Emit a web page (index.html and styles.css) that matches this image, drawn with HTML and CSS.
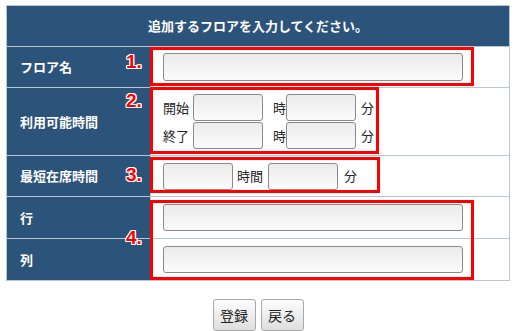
FILE: index.html
```html
<!DOCTYPE html>
<html lang="ja">

<head>
    <meta charset="UTF-8">
    <title>フロア追加</title>
    <link rel="stylesheet" href="styles.css">
</head>

<body>
    <div class="page">
        <div class="form-wrap">
            <table class="floor-form">
                <tr>
                    <th colspan="2" class="form-title">追加するフロアを入力してください。</th>
                </tr>
                <tr class="row-a">
                    <th>フロア名</th>
                    <td><input type="text" class="wide"></td>
                </tr>
                <tr class="row-b">
                    <th>利用可能時間</th>
                    <td>
                        <div class="time-line">
                            <span>開始</span><input type="text" class="short first"><span class="unit-h">時</span><input type="text" class="short"><span class="unit-m">分</span>
                        </div>
                        <div class="time-line">
                            <span>終了</span><input type="text" class="short first"><span class="unit-h">時</span><input type="text" class="short"><span class="unit-m">分</span>
                        </div>
                    </td>
                </tr>
                <tr class="row-a">
                    <th>最短在席時間</th>
                    <td>
                        <div class="time-line">
                            <input type="text" class="short"><span class="unit-hours">時間</span><input type="text" class="short"><span class="unit-min">分</span>
                        </div>
                    </td>
                </tr>
                <tr class="row-c">
                    <th>行</th>
                    <td><input type="text" class="wide"></td>
                </tr>
                <tr class="row-c">
                    <th>列</th>
                    <td><input type="text" class="wide"></td>
                </tr>
            </table>

            <!-- annotations -->
            <div class="mark box1"></div>
            <div class="mark box2"></div>
            <div class="mark box3"></div>
            <div class="mark box4"></div>
            <span class="num num1">1.</span>
            <span class="num num2">2.</span>
            <span class="num num3">3.</span>
            <span class="num num4">4.</span>
        </div>

        <div class="buttons">
            <button class="btn">登録</button>
            <button class="btn">戻る</button>
        </div>
    </div>
</body>

</html>
```

FILE: styles.css
```css
body {
    margin: 0;
    background: #fff;
    font-family: "Noto Sans CJK JP", "DejaVu Sans", sans-serif;
    font-size: 13px;
    color: #222;
}

.page {
    width: 515px;
    height: 331px;
    overflow: hidden;
    padding: 5px 5px 0 6px;
    box-sizing: border-box;
}

.form-wrap {
    position: relative;
}

.floor-form {
    width: 504px;
    border-collapse: collapse;
    border: 1px solid #b8c7d6;
}

.floor-form th,
.floor-form td {
    border: 1px solid #b8c7d6;
    padding: 0;
    line-height: 16px;
}

.floor-form th {
    background-color: #2c5379;
    color: #fff;
    font-weight: bold;
    text-align: left;
    width: 130px;
    padding-left: 13px;
}

.floor-form th.form-title {
    text-align: center;
    padding-left: 0;
    height: 40px;
}

.floor-form td {
    padding-left: 12px;
}

.row-a th,
.row-a td {
    height: 40px;
}

.row-b th,
.row-b td {
    height: 67px;
}

.row-c th,
.row-c td {
    height: 41px;
}

input {
    box-sizing: border-box;
    height: 27px;
    border: 1px solid #8a8a8a;
    border-radius: 3px;
    background: linear-gradient(#ebebeb, #fbfbfb);
    margin: 0;
    padding: 0 4px;
    font-family: inherit;
    display: block;
}

input.wide {
    width: 300px;
    height: 28px;
}

.row-c input.wide {
    height: 27px;
}

input.short {
    width: 70px;
}

.time-line {
    display: flex;
    align-items: center;
    height: 28px;
}

.time-line input.first {
    margin-left: 4px;
}

.unit-h {
    margin: 0 0 0 10px;
    width: 13px;
}

.unit-m {
    margin-left: 5px;
}

.unit-hours {
    margin: 0 5px 0 4px;
}

.unit-min {
    margin-left: 6px;
}

.mark {
    position: absolute;
    border: 3px solid #f00;
    box-sizing: border-box;
}

.box1 {
    left: 144px;
    top: 42px;
    width: 324px;
    height: 39px;
}

.box2 {
    left: 144px;
    top: 82px;
    width: 229px;
    height: 67px;
}

.box3 {
    left: 144px;
    top: 152px;
    width: 230px;
    height: 36px;
}

.box4 {
    left: 144px;
    top: 195px;
    width: 324px;
    height: 80px;
}

.num {
    position: absolute;
    left: 120px;
    font-family: "Liberation Sans", Arial, sans-serif;
    font-size: 19px;
    font-weight: bold;
    line-height: 19px;
    color: #f00;
    text-shadow: 1px 0 #fff, -1px 0 #fff, 0 1px #fff, 0 -1px #fff,
        1px 1px #fff, -1px -1px #fff, 1px -1px #fff, -1px 1px #fff;
}

.num1 { top: 47px; }
.num2 { top: 86px; }
.num3 { top: 160px; }
.num4 { top: 223px; }

.buttons {
    display: flex;
    justify-content: center;
    gap: 5px;
    margin-top: 18px;
}

.btn {
    width: 43px;
    height: 32px;
    padding: 0;
    border: 1px solid #a8a8a8;
    border-radius: 3px;
    background: linear-gradient(#fdfdfd, #dedede);
    font-family: "Noto Sans CJK JP", sans-serif;
    font-size: 14px;
    color: #222;
}
```
